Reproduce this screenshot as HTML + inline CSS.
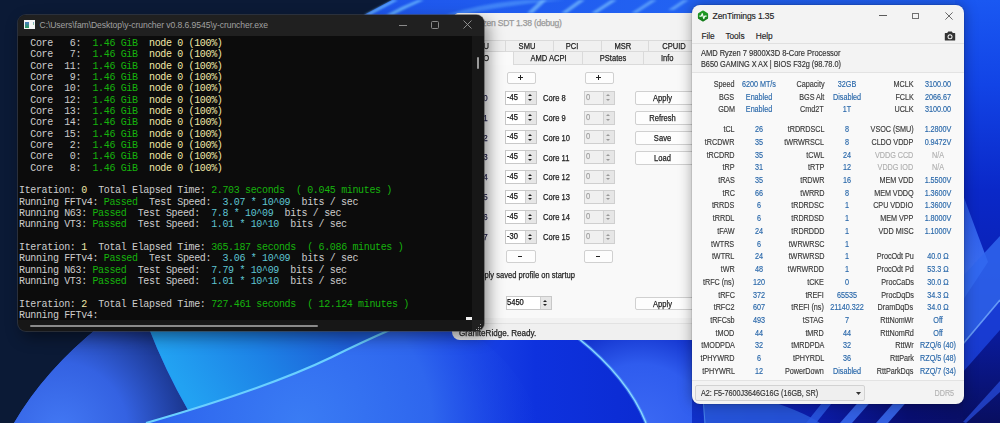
<!DOCTYPE html>
<html><head><meta charset="utf-8"><style>
*{margin:0;padding:0;box-sizing:border-box}
html,body{width:1000px;height:423px;overflow:hidden;background:#0b1a36;font-family:"Liberation Sans",sans-serif}
#bg{position:absolute;left:0;top:0}
.a{position:absolute;white-space:nowrap}
/* terminal */
#term{position:absolute;left:18px;top:15px;width:466px;height:316px;background:#171717;border-radius:8px;overflow:hidden;box-shadow:0 0 0 1px rgba(70,70,70,.55),4px 6px 16px rgba(0,0,0,.45)}
#term .tb{position:absolute;left:0;top:0;width:466px;height:22px;background:#202020}
#term .content{position:absolute;left:0;top:22px;width:454px;height:283.5px;background:#0c0c0c;overflow:hidden}
#term .tl{position:absolute;left:1px;white-space:pre;font-family:"Liberation Mono",monospace;font-size:10px;line-height:12px;color:#cccccc;letter-spacing:-0.35px}
.g{color:#16b30c}.y{color:#f1e9a8}.c{color:#5ec4d2}
/* sdt */
#sdt{position:absolute;left:452px;top:13px;width:300px;height:327px;background:#f0f0f0;border-radius:8px;overflow:hidden;font-size:8px;color:#1e1e1e}
#sdt .t{font-size:8px;letter-spacing:-0.05px}
.btn{position:absolute;background:#fdfdfd;border:1px solid #d0d0d0;border-radius:2px}
.nud{position:absolute;background:#fff;border:1px solid #c8c8c8}
.nud.dis{background:#f0f0f0;border-color:#cfcfcf}
.sp{position:absolute;right:0;top:0;width:11px;height:100%;background:linear-gradient(#e6e6e6 0,#e6e6e6 46%,#c8c8c8 46%,#c8c8c8 54%,#e6e6e6 54%);border-left:1px solid #d0d0d0}
.sp:before{content:"";position:absolute;left:2.5px;top:2.8px;border-left:2.6px solid transparent;border-right:2.6px solid transparent;border-bottom:2.4px solid #222}
.sp:after{content:"";position:absolute;left:2.5px;bottom:2.8px;border-left:2.6px solid transparent;border-right:2.6px solid transparent;border-top:2.4px solid #222}
.dis .sp:before{border-bottom-color:#999}.dis .sp:after{border-top-color:#999}
/* zen */
#zen{position:absolute;left:692px;top:5px;width:272px;height:399px;background:#f3f3f3;border-radius:8px;overflow:hidden;box-shadow:0 0 14px rgba(0,0,0,.35),0 0 0 1px rgba(0,0,0,.08)}
.zt{position:absolute;font-size:8.2px;letter-spacing:-0.05px;transform:scaleX(0.885);color:#3a3a3a;-webkit-text-stroke:0.15px currentColor;white-space:nowrap;line-height:10px}
.zv{color:#2a68aa}
</style></head><body>
<svg id="bg" width="1000" height="423" viewBox="0 0 1000 423">
  <defs>
    <filter id="blur1" x="-20%" y="-50%" width="140%" height="200%"><feGaussianBlur stdDeviation="0.8"/></filter>
    <linearGradient id="topblue" x1="0" y1="0" x2="1" y2="0">
      <stop offset="0" stop-color="#1e56ec"/><stop offset="0.5" stop-color="#2262f2"/><stop offset="1" stop-color="#1f5ef4"/>
    </linearGradient>
    <linearGradient id="rightblue" x1="0" y1="0" x2="0" y2="423" gradientUnits="userSpaceOnUse">
      <stop offset="0" stop-color="#1a58f2"/><stop offset="0.2" stop-color="#1244e6"/><stop offset="0.45" stop-color="#0a28c8"/><stop offset="0.62" stop-color="#0a22b8"/><stop offset="0.8" stop-color="#0a1a98"/><stop offset="1" stop-color="#080e60"/></linearGradient>
    <radialGradient id="petal1" cx="60" cy="430" r="150" gradientUnits="userSpaceOnUse">
      <stop offset="0" stop-color="#4278f4"/><stop offset="0.45" stop-color="#3462e2"/><stop offset="0.8" stop-color="#1e3c9a"/><stop offset="1" stop-color="#132a70"/></radialGradient>
    <linearGradient id="cyanp" x1="190" y1="400" x2="330" y2="310" gradientUnits="userSpaceOnUse">
      <stop offset="0" stop-color="#22a2f2"/><stop offset="0.5" stop-color="#1d82e6"/><stop offset="1" stop-color="#1e5cd6"/></linearGradient>
    <radialGradient id="lowp" cx="300" cy="423" r="240" gradientUnits="userSpaceOnUse">
      <stop offset="0" stop-color="#3a7cf4"/><stop offset="0.55" stop-color="#2e66ee"/><stop offset="1" stop-color="#1238e2" stop-opacity="0"/>
    </radialGradient>
    <linearGradient id="deepb" x1="400" y1="0" x2="700" y2="0" gradientUnits="userSpaceOnUse">
      <stop offset="0" stop-color="#2a5cf0"/><stop offset="0.25" stop-color="#1a44e6"/><stop offset="0.45" stop-color="#0e32de"/><stop offset="1" stop-color="#0a28cc"/></linearGradient>
    <radialGradient id="rp" cx="640" cy="430" r="110" gradientUnits="userSpaceOnUse">
      <stop offset="0" stop-color="#3c6af4"/><stop offset="0.6" stop-color="#2f5cee"/><stop offset="1" stop-color="#0e2cc8"/>
    </radialGradient>
    <linearGradient id="rpet" x1="963" y1="200" x2="985" y2="290" gradientUnits="userSpaceOnUse">
      <stop offset="0" stop-color="#2a58e8"/><stop offset="1" stop-color="#3e72f2"/>
    </linearGradient>
    <linearGradient id="zb" x1="692" y1="0" x2="1000" y2="0" gradientUnits="userSpaceOnUse">
      <stop offset="0" stop-color="#1030c8"/><stop offset="0.4" stop-color="#0c1ca8"/><stop offset="0.7" stop-color="#080e70"/><stop offset="1" stop-color="#0a1060"/>
    </linearGradient>
  </defs>
  <rect width="1000" height="423" fill="#0b1a36"/>
  <!-- top strip -->
  <path d="M392 0 L1000 0 L1000 16 L362 16 Z" fill="url(#topblue)"/>
  <g filter="url(#blur1)">
  <path d="M364 15 L393 0 L398 0 L370 15 Z" fill="#6ab8ff" opacity=".9"/>
  <path d="M386 15 Q402 6 418 0 L424 0 Q408 7 393 15 Z" fill="#6ab8ff" opacity=".85"/>
  <path d="M446 15 Q482 3 525 0 L565 0 Q505 5 462 15 Z" fill="#4a90fa" opacity=".75"/>
  <path d="M527 13 L541 0 L547 0 L533 13 Z" fill="#7ac0ff" opacity=".7"/>
  <path d="M561 13 L579 0 L585 0 L567 13 Z" fill="#7ac0ff" opacity=".7"/>
  <path d="M591 13 L611 0 L617 0 L597 13 Z" fill="#7ac0ff" opacity=".7"/>
  <path d="M631 13 L651 0 L657 0 L637 13 Z" fill="#7ac0ff" opacity=".6"/>
  <path d="M668 10 L683 0 L689 0 L674 10 Z" fill="#7ac0ff" opacity=".6"/>
  </g>
  <!-- right strip -->
  <rect x="955" y="0" width="45" height="423" fill="url(#rightblue)"/>
  <path d="M963 195 Q976 230 988 262 L963 300 Z" fill="url(#rpet)"/>
  <path d="M963 276 L1000 236 L1000 300 L963 344 Z" fill="#3066ee" opacity=".85"/>
  <path d="M963 344 L1000 300 L1000 330 L963 372 Z" fill="#1c44e0" opacity=".8"/>
  <path d="M963 344 L1000 300" stroke="#78b0ff" stroke-width="1.6" opacity=".8"/>
  <path d="M963 422 L1000 381 L1000 392 L966 423 Z" fill="#2a50e0" opacity=".7"/>
  <!-- bottom area -->
  <rect x="0" y="326" width="700" height="97" fill="url(#deepb)"/>
  <path d="M0 326 L100 326 Q45 370 14 423 L0 423 Z" fill="#0b1a36"/>
  <path d="M100 326 L148 326 Q165 370 188 410 L146 423 L14 423 Q45 370 100 326 Z" fill="url(#petal1)"/>
  <path d="M148 326 L400 326 L390 330 Q360 343 332 357 Q268 388 188 410 Q165 370 148 326 Z" fill="url(#cyanp)"/>
  <path d="M146 423 Q268 388 332 357 Q360 343 390 330 L400 326 L460 326 Q520 360 540 423 Z" fill="url(#lowp)"/>
  <path d="M146 423 Q268 388 332 357 Q360 343 392 329 L402 325" stroke="#6ad0ff" stroke-width="2.2" fill="none"/>
  <path d="M578 338 Q628 378 646 423 L700 423 L700 338 Z" fill="url(#rp)"/>
  <path d="M578 338 Q628 378 646 423" stroke="#5ab0ff" stroke-width="3.5" fill="none" opacity=".5"/><path d="M578 338 Q628 378 646 423" stroke="#8ad8ff" stroke-width="1.4" fill="none"/>
  
  <rect x="692" y="398" width="271" height="25" fill="url(#zb)"/>
  <path d="M703 398 L760 398 Q800 410 820 423 L704 423 Z" fill="#2a5cdc" opacity=".8"/>
  <path d="M703 398 L705 423" stroke="#5aa0f0" stroke-width="1" opacity=".6"/>
  <path d="M806 423 L826 398 L836 398 L816 423 Z" fill="#2a58e0" opacity=".85"/>
  <path d="M840 423 L862 398 L874 398 L852 423 Z" fill="#3a6cf0" opacity=".85"/>
  <path d="M876 423 L898 398 L910 398 L888 423 Z" fill="#3a6cf0" opacity=".85"/>
  
</svg>
<div id="sdt"><div class="a" style="left:0;top:0;width:300px;height:26.6px;background:#f3f3f3"></div>
<div class="a" style="top:5.32px;font-size:8.60px;letter-spacing:-0.26px;line-height:10px;-webkit-text-stroke:0.25px currentColor;left:20.5px;transform-origin:0 50%;color:#9a9a9a;">Ryzen SDT 1.38 (debug)</div>
<div class="a" style="left:0.0px;top:26.6px;width:308.0px;height:24.9px;background:#f0f0f0"></div>
<div class="a" style="left:0.0px;top:26.6px;width:308.0px;height:12.9px;border-top:1px solid #dadada;border-bottom:1px solid #dadada"></div>
<div class="a" style="left:5.5px;top:26.6px;width:48.0px;height:12.4px;border-right:1px solid #dadada"></div>
<div class="a" style="top:27.55px;font-size:8.80px;letter-spacing:0.00px;line-height:10px;-webkit-text-stroke:0.25px currentColor;left:5.0px;width:48.0px;text-align:center;transform-origin:50% 50%;transform:scaleX(0.860);">CPU</div>
<div class="a" style="left:53.5px;top:26.6px;width:48.0px;height:12.4px;border-right:1px solid #dadada"></div>
<div class="a" style="top:27.55px;font-size:8.80px;letter-spacing:0.00px;line-height:10px;-webkit-text-stroke:0.25px currentColor;left:50.8px;width:48.0px;text-align:center;transform-origin:50% 50%;transform:scaleX(0.860);">SMU</div>
<div class="a" style="left:101.5px;top:26.6px;width:48.1px;height:12.4px;border-right:1px solid #dadada"></div>
<div class="a" style="top:27.55px;font-size:8.80px;letter-spacing:0.00px;line-height:10px;-webkit-text-stroke:0.25px currentColor;left:96.2px;width:48.1px;text-align:center;transform-origin:50% 50%;transform:scaleX(0.860);">PCI</div>
<div class="a" style="left:149.6px;top:26.6px;width:47.9px;height:12.4px;border-right:1px solid #dadada"></div>
<div class="a" style="top:27.55px;font-size:8.80px;letter-spacing:0.00px;line-height:10px;-webkit-text-stroke:0.25px currentColor;left:147.3px;width:47.9px;text-align:center;transform-origin:50% 50%;transform:scaleX(0.860);">MSR</div>
<div class="a" style="left:197.5px;top:26.6px;width:48.0px;height:12.4px;border-right:1px solid #dadada"></div>
<div class="a" style="top:27.55px;font-size:8.80px;letter-spacing:0.00px;line-height:10px;-webkit-text-stroke:0.25px currentColor;left:197.6px;width:48.0px;text-align:center;transform-origin:50% 50%;transform:scaleX(0.860);">CPUID</div>
<div class="a" style="left:0.0px;top:39.0px;width:308.0px;height:12.5px;border-bottom:1px solid #dadada"></div>
<div class="a" style="left:62.3px;top:39.0px;width:69.2px;height:12.5px;border-right:1px solid #dadada"></div>
<div class="a" style="top:40.25px;font-size:8.80px;letter-spacing:0.00px;line-height:10px;-webkit-text-stroke:0.25px currentColor;left:61.8px;width:69.2px;text-align:center;transform-origin:50% 50%;transform:scaleX(0.860);">AMD ACPI</div>
<div class="a" style="left:131.5px;top:39.0px;width:60.0px;height:12.5px;border-right:1px solid #dadada"></div>
<div class="a" style="top:40.25px;font-size:8.80px;letter-spacing:0.00px;line-height:10px;-webkit-text-stroke:0.25px currentColor;left:131.3px;width:60.0px;text-align:center;transform-origin:50% 50%;transform:scaleX(0.860);">PStates</div>
<div class="a" style="left:191.5px;top:39.0px;width:56.5px;height:12.5px;border-right:1px solid #dadada"></div>
<div class="a" style="top:40.25px;font-size:8.80px;letter-spacing:0.00px;line-height:10px;-webkit-text-stroke:0.25px currentColor;left:186.5px;width:56.5px;text-align:center;transform-origin:50% 50%;transform:scaleX(0.860);">Info</div>
<div class="a" style="left:-12.0px;top:38.0px;width:74.3px;height:15.0px;background:#fafafa;border:1px solid #dadada;border-bottom:none"></div>
<div class="a" style="top:39.95px;font-size:8.80px;letter-spacing:0.00px;line-height:10px;-webkit-text-stroke:0.25px currentColor;right:263.0px;transform-origin:100% 50%;transform:scaleX(0.860);color:#1e1e1e;">CO</div>
<div class="a" style="left:0.0px;top:51.5px;width:308.0px;height:253.8px;background:#f9f9f9"></div>
<div class="a" style="left:0.0px;top:305.3px;width:308.0px;height:6.0px;background:#f2f2f2;border-bottom:1px solid #e2e2e2"></div>
<div class="btn" style="left:54.8px;top:58.6px;width:29.0px;height:12.8px"></div>
<div class="a" style="left:54.8px;top:58.6px;width:29.0px;height:12.8px;"><div class="a" style="left:11.5px;top:5.5px;width:5px;height:1.2px;background:#222"></div><div class="a" style="left:13.4px;top:3.6px;width:1.2px;height:5px;background:#222"></div></div>
<div class="btn" style="left:132.5px;top:58.6px;width:29.0px;height:12.8px"></div>
<div class="a" style="left:132.5px;top:58.6px;width:29.0px;height:12.8px;"><div class="a" style="left:11.5px;top:5.5px;width:5px;height:1.2px;background:#222"></div><div class="a" style="left:13.4px;top:3.6px;width:1.2px;height:5px;background:#222"></div></div>
<div class="btn" style="left:54.2px;top:236.7px;width:29.4px;height:13.8px"></div>
<div class="a" style="left:54.2px;top:236.7px;width:29.4px;height:13.8px;"><div class="a" style="left:12px;top:6px;width:4px;height:1.2px;background:#222"></div></div>
<div class="btn" style="left:132.0px;top:236.7px;width:29.4px;height:13.8px"></div>
<div class="a" style="left:132.0px;top:236.7px;width:29.4px;height:13.8px;"><div class="a" style="left:12px;top:6px;width:4px;height:1.2px;background:#222"></div></div>
<div class="a" style="top:79.81px;font-size:9.20px;letter-spacing:0.00px;line-height:10px;-webkit-text-stroke:0.25px currentColor;right:264.5px;transform-origin:100% 50%;transform:scaleX(0.860);color:#1e1e4a;">Core 0</div>
<div class="nud" style="left:53.4px;top:77.7px;width:31.3px;height:14.0px"><div class="sp"></div></div>
<div class="a" style="top:78.75px;font-size:8.80px;letter-spacing:0.00px;line-height:10px;-webkit-text-stroke:0.25px currentColor;left:54.6px;transform-origin:0 50%;transform:scaleX(0.860);color:#111;">-45</div>
<div class="a" style="top:79.95px;font-size:8.80px;letter-spacing:0.00px;line-height:10px;-webkit-text-stroke:0.25px currentColor;left:90.6px;transform-origin:0 50%;transform:scaleX(0.860);">Core 8</div>
<div class="nud dis" style="left:131.6px;top:77.7px;width:31.1px;height:14.0px"><div class="sp"></div></div>
<div class="a" style="top:78.75px;font-size:8.80px;letter-spacing:0.00px;line-height:10px;-webkit-text-stroke:0.25px currentColor;left:133.5px;transform-origin:0 50%;transform:scaleX(0.860);color:#a0a0a0;">0</div>
<div class="a" style="top:99.68px;font-size:9.20px;letter-spacing:0.00px;line-height:10px;-webkit-text-stroke:0.25px currentColor;right:264.5px;transform-origin:100% 50%;transform:scaleX(0.860);color:#1e1e4a;">Core 1</div>
<div class="nud" style="left:53.4px;top:97.6px;width:31.3px;height:14.0px"><div class="sp"></div></div>
<div class="a" style="top:98.62px;font-size:8.80px;letter-spacing:0.00px;line-height:10px;-webkit-text-stroke:0.25px currentColor;left:54.6px;transform-origin:0 50%;transform:scaleX(0.860);color:#111;">-45</div>
<div class="a" style="top:99.82px;font-size:8.80px;letter-spacing:0.00px;line-height:10px;-webkit-text-stroke:0.25px currentColor;left:90.6px;transform-origin:0 50%;transform:scaleX(0.860);">Core 9</div>
<div class="nud dis" style="left:131.6px;top:97.6px;width:31.1px;height:14.0px"><div class="sp"></div></div>
<div class="a" style="top:98.62px;font-size:8.80px;letter-spacing:0.00px;line-height:10px;-webkit-text-stroke:0.25px currentColor;left:133.5px;transform-origin:0 50%;transform:scaleX(0.860);color:#a0a0a0;">0</div>
<div class="a" style="top:119.55px;font-size:9.20px;letter-spacing:0.00px;line-height:10px;-webkit-text-stroke:0.25px currentColor;right:264.5px;transform-origin:100% 50%;transform:scaleX(0.860);color:#1e1e4a;">Core 2</div>
<div class="nud" style="left:53.4px;top:117.4px;width:31.3px;height:14.0px"><div class="sp"></div></div>
<div class="a" style="top:118.49px;font-size:8.80px;letter-spacing:0.00px;line-height:10px;-webkit-text-stroke:0.25px currentColor;left:54.6px;transform-origin:0 50%;transform:scaleX(0.860);color:#111;">-45</div>
<div class="a" style="top:119.69px;font-size:8.80px;letter-spacing:0.00px;line-height:10px;-webkit-text-stroke:0.25px currentColor;left:90.6px;transform-origin:0 50%;transform:scaleX(0.860);">Core 10</div>
<div class="nud dis" style="left:131.6px;top:117.4px;width:31.1px;height:14.0px"><div class="sp"></div></div>
<div class="a" style="top:118.49px;font-size:8.80px;letter-spacing:0.00px;line-height:10px;-webkit-text-stroke:0.25px currentColor;left:133.5px;transform-origin:0 50%;transform:scaleX(0.860);color:#a0a0a0;">0</div>
<div class="a" style="top:139.42px;font-size:9.20px;letter-spacing:0.00px;line-height:10px;-webkit-text-stroke:0.25px currentColor;right:264.5px;transform-origin:100% 50%;transform:scaleX(0.860);color:#1e1e4a;">Core 3</div>
<div class="nud" style="left:53.4px;top:137.3px;width:31.3px;height:14.0px"><div class="sp"></div></div>
<div class="a" style="top:138.36px;font-size:8.80px;letter-spacing:0.00px;line-height:10px;-webkit-text-stroke:0.25px currentColor;left:54.6px;transform-origin:0 50%;transform:scaleX(0.860);color:#111;">-45</div>
<div class="a" style="top:139.56px;font-size:8.80px;letter-spacing:0.00px;line-height:10px;-webkit-text-stroke:0.25px currentColor;left:90.6px;transform-origin:0 50%;transform:scaleX(0.860);">Core 11</div>
<div class="nud dis" style="left:131.6px;top:137.3px;width:31.1px;height:14.0px"><div class="sp"></div></div>
<div class="a" style="top:138.36px;font-size:8.80px;letter-spacing:0.00px;line-height:10px;-webkit-text-stroke:0.25px currentColor;left:133.5px;transform-origin:0 50%;transform:scaleX(0.860);color:#a0a0a0;">0</div>
<div class="a" style="top:159.29px;font-size:9.20px;letter-spacing:0.00px;line-height:10px;-webkit-text-stroke:0.25px currentColor;right:264.5px;transform-origin:100% 50%;transform:scaleX(0.860);color:#1e1e4a;">Core 4</div>
<div class="nud" style="left:53.4px;top:157.2px;width:31.3px;height:14.0px"><div class="sp"></div></div>
<div class="a" style="top:158.23px;font-size:8.80px;letter-spacing:0.00px;line-height:10px;-webkit-text-stroke:0.25px currentColor;left:54.6px;transform-origin:0 50%;transform:scaleX(0.860);color:#111;">-45</div>
<div class="a" style="top:159.43px;font-size:8.80px;letter-spacing:0.00px;line-height:10px;-webkit-text-stroke:0.25px currentColor;left:90.6px;transform-origin:0 50%;transform:scaleX(0.860);">Core 12</div>
<div class="nud dis" style="left:131.6px;top:157.2px;width:31.1px;height:14.0px"><div class="sp"></div></div>
<div class="a" style="top:158.23px;font-size:8.80px;letter-spacing:0.00px;line-height:10px;-webkit-text-stroke:0.25px currentColor;left:133.5px;transform-origin:0 50%;transform:scaleX(0.860);color:#a0a0a0;">0</div>
<div class="a" style="top:179.16px;font-size:9.20px;letter-spacing:0.00px;line-height:10px;-webkit-text-stroke:0.25px currentColor;right:264.5px;transform-origin:100% 50%;transform:scaleX(0.860);color:#1e1e4a;">Core 5</div>
<div class="nud" style="left:53.4px;top:177.1px;width:31.3px;height:14.0px"><div class="sp"></div></div>
<div class="a" style="top:178.10px;font-size:8.80px;letter-spacing:0.00px;line-height:10px;-webkit-text-stroke:0.25px currentColor;left:54.6px;transform-origin:0 50%;transform:scaleX(0.860);color:#111;">-45</div>
<div class="a" style="top:179.30px;font-size:8.80px;letter-spacing:0.00px;line-height:10px;-webkit-text-stroke:0.25px currentColor;left:90.6px;transform-origin:0 50%;transform:scaleX(0.860);">Core 13</div>
<div class="nud dis" style="left:131.6px;top:177.1px;width:31.1px;height:14.0px"><div class="sp"></div></div>
<div class="a" style="top:178.10px;font-size:8.80px;letter-spacing:0.00px;line-height:10px;-webkit-text-stroke:0.25px currentColor;left:133.5px;transform-origin:0 50%;transform:scaleX(0.860);color:#a0a0a0;">0</div>
<div class="a" style="top:199.03px;font-size:9.20px;letter-spacing:0.00px;line-height:10px;-webkit-text-stroke:0.25px currentColor;right:264.5px;transform-origin:100% 50%;transform:scaleX(0.860);color:#1e1e4a;">Core 6</div>
<div class="nud" style="left:53.4px;top:196.9px;width:31.3px;height:14.0px"><div class="sp"></div></div>
<div class="a" style="top:197.97px;font-size:8.80px;letter-spacing:0.00px;line-height:10px;-webkit-text-stroke:0.25px currentColor;left:54.6px;transform-origin:0 50%;transform:scaleX(0.860);color:#111;">-45</div>
<div class="a" style="top:199.17px;font-size:8.80px;letter-spacing:0.00px;line-height:10px;-webkit-text-stroke:0.25px currentColor;left:90.6px;transform-origin:0 50%;transform:scaleX(0.860);">Core 14</div>
<div class="nud dis" style="left:131.6px;top:196.9px;width:31.1px;height:14.0px"><div class="sp"></div></div>
<div class="a" style="top:197.97px;font-size:8.80px;letter-spacing:0.00px;line-height:10px;-webkit-text-stroke:0.25px currentColor;left:133.5px;transform-origin:0 50%;transform:scaleX(0.860);color:#a0a0a0;">0</div>
<div class="a" style="top:218.90px;font-size:9.20px;letter-spacing:0.00px;line-height:10px;-webkit-text-stroke:0.25px currentColor;right:264.5px;transform-origin:100% 50%;transform:scaleX(0.860);color:#1e1e4a;">Core 7</div>
<div class="nud" style="left:53.4px;top:216.8px;width:31.3px;height:14.0px"><div class="sp"></div></div>
<div class="a" style="top:217.84px;font-size:8.80px;letter-spacing:0.00px;line-height:10px;-webkit-text-stroke:0.25px currentColor;left:54.6px;transform-origin:0 50%;transform:scaleX(0.860);color:#111;">-30</div>
<div class="a" style="top:219.04px;font-size:8.80px;letter-spacing:0.00px;line-height:10px;-webkit-text-stroke:0.25px currentColor;left:90.6px;transform-origin:0 50%;transform:scaleX(0.860);">Core 15</div>
<div class="nud dis" style="left:131.6px;top:216.8px;width:31.1px;height:14.0px"><div class="sp"></div></div>
<div class="a" style="top:217.84px;font-size:8.80px;letter-spacing:0.00px;line-height:10px;-webkit-text-stroke:0.25px currentColor;left:133.5px;transform-origin:0 50%;transform:scaleX(0.860);color:#a0a0a0;">0</div>
<div class="btn" style="left:182.6px;top:77.9px;width:62.4px;height:14.0px"></div>
<div class="a" style="top:79.95px;font-size:8.80px;letter-spacing:0.00px;line-height:10px;-webkit-text-stroke:0.25px currentColor;left:182.2px;width:57.0px;text-align:center;transform-origin:50% 50%;transform:scaleX(0.860);">Apply</div>
<div class="btn" style="left:182.6px;top:97.8px;width:62.4px;height:14.0px"></div>
<div class="a" style="top:99.82px;font-size:8.80px;letter-spacing:0.00px;line-height:10px;-webkit-text-stroke:0.25px currentColor;left:182.2px;width:57.0px;text-align:center;transform-origin:50% 50%;transform:scaleX(0.860);">Refresh</div>
<div class="btn" style="left:182.6px;top:117.6px;width:62.4px;height:14.0px"></div>
<div class="a" style="top:119.69px;font-size:8.80px;letter-spacing:0.00px;line-height:10px;-webkit-text-stroke:0.25px currentColor;left:182.2px;width:57.0px;text-align:center;transform-origin:50% 50%;transform:scaleX(0.860);">Save</div>
<div class="btn" style="left:182.6px;top:137.5px;width:62.4px;height:14.0px"></div>
<div class="a" style="top:139.56px;font-size:8.80px;letter-spacing:0.00px;line-height:10px;-webkit-text-stroke:0.25px currentColor;left:182.2px;width:57.0px;text-align:center;transform-origin:50% 50%;transform:scaleX(0.860);">Load</div>
<div class="a" style="top:256.95px;font-size:8.80px;letter-spacing:0.00px;line-height:10px;-webkit-text-stroke:0.25px currentColor;right:177.5px;transform-origin:100% 50%;transform:scaleX(0.860);">Apply saved profile on startup</div>
<div class="nud" style="left:53.7px;top:283.4px;width:46.3px;height:13.5px"><div class="sp"></div></div>
<div class="a" style="top:284.25px;font-size:8.80px;letter-spacing:0.00px;line-height:10px;-webkit-text-stroke:0.25px currentColor;left:54.8px;transform-origin:0 50%;transform:scaleX(0.860);color:#111;">5450</div>
<div class="btn" style="left:182.5px;top:283.6px;width:62.5px;height:13.7px"></div>
<div class="a" style="top:285.95px;font-size:8.80px;letter-spacing:0.00px;line-height:10px;-webkit-text-stroke:0.25px currentColor;left:182.1px;width:57.0px;text-align:center;transform-origin:50% 50%;transform:scaleX(0.860);">Apply</div>
<div class="a" style="top:314.95px;font-size:8.80px;letter-spacing:0.00px;line-height:10px;-webkit-text-stroke:0.25px currentColor;left:7.0px;transform-origin:0 50%;transform:scaleX(0.920);">GraniteRidge. Ready.</div></div>
<div id="term"><div class="a" style="left:0;top:-1px;width:466px;height:317px">
 <div class="tb">
  <div class="a" style="left:6px;top:6px;width:11px;height:9px;background:#f4f4f4"><div class="a" style="left:1px;top:2px;width:4px;height:5.5px;background:linear-gradient(#4a7ac0,#2a9a5a)"></div><div class="a" style="left:8.5px;top:2px;width:1.5px;height:3px;background:linear-gradient(#7aa0d0,#8ad08a)"></div></div>
  <div class="a" style="left:21.5px;top:5.5px;font-size:8.6px;color:#a0a0a0;letter-spacing:-0.08px">C:\Users\fam\Desktop\y-cruncher v0.8.6.9545\y-cruncher.exe</div>
  <div class="a" style="left:381px;top:10.5px;width:8px;height:1px;background:#8a8a8a"></div>
  <div class="a" style="left:413px;top:6.5px;width:8px;height:8px;border:1px solid #8a8a8a;border-radius:1.5px"></div>
  <svg class="a" style="left:445px;top:6px" width="9" height="9" viewBox="0 0 9 9"><path d="M0.5 0.5L8.5 8.5M8.5 0.5L0.5 8.5" stroke="#9a9a9a" stroke-width="0.9"/></svg>
 </div>
 <div class="content"><div class="tl" style="top:2.00px">  Core   6:  <span class="g">1.46 GiB</span>  <span class="y">node 0 (100%)</span></div><div class="tl" style="top:13.33px">  Core   7:  <span class="g">1.46 GiB</span>  <span class="y">node 0 (100%)</span></div><div class="tl" style="top:24.66px">  Core  11:  <span class="g">1.46 GiB</span>  <span class="y">node 0 (100%)</span></div><div class="tl" style="top:35.99px">  Core   9:  <span class="g">1.46 GiB</span>  <span class="y">node 0 (100%)</span></div><div class="tl" style="top:47.32px">  Core  10:  <span class="g">1.46 GiB</span>  <span class="y">node 0 (100%)</span></div><div class="tl" style="top:58.65px">  Core  12:  <span class="g">1.46 GiB</span>  <span class="y">node 0 (100%)</span></div><div class="tl" style="top:69.98px">  Core  13:  <span class="g">1.46 GiB</span>  <span class="y">node 0 (100%)</span></div><div class="tl" style="top:81.31px">  Core  14:  <span class="g">1.46 GiB</span>  <span class="y">node 0 (100%)</span></div><div class="tl" style="top:92.64px">  Core  15:  <span class="g">1.46 GiB</span>  <span class="y">node 0 (100%)</span></div><div class="tl" style="top:103.97px">  Core   2:  <span class="g">1.46 GiB</span>  <span class="y">node 0 (100%)</span></div><div class="tl" style="top:115.30px">  Core   0:  <span class="g">1.46 GiB</span>  <span class="y">node 0 (100%)</span></div><div class="tl" style="top:126.63px">  Core   8:  <span class="g">1.46 GiB</span>  <span class="y">node 0 (100%)</span></div><div class="tl" style="top:137.96px"></div><div class="tl" style="top:149.29px">Iteration: <span class="y">0</span>  Total Elapsed Time: <span class="g">2.703 seconds  ( 0.045 minutes )</span></div><div class="tl" style="top:160.62px">Running FFTv4: <span class="g">Passed</span>  Test Speed:  <span class="c">3.07 * 10^09</span>  bits / sec</div><div class="tl" style="top:171.95px">Running N63: <span class="g">Passed</span>  Test Speed:  <span class="c">7.8 * 10^09</span>  bits / sec</div><div class="tl" style="top:183.28px">Running VT3: <span class="g">Passed</span>  Test Speed:  <span class="c">1.01 * 10^10</span>  bits / sec</div><div class="tl" style="top:194.61px"></div><div class="tl" style="top:205.94px">Iteration: <span class="y">1</span>  Total Elapsed Time: <span class="g">365.187 seconds  ( 6.086 minutes )</span></div><div class="tl" style="top:217.27px">Running FFTv4: <span class="g">Passed</span>  Test Speed:  <span class="c">3.06 * 10^09</span>  bits / sec</div><div class="tl" style="top:228.60px">Running N63: <span class="g">Passed</span>  Test Speed:  <span class="c">7.79 * 10^09</span>  bits / sec</div><div class="tl" style="top:239.93px">Running VT3: <span class="g">Passed</span>  Test Speed:  <span class="c">1.01 * 10^10</span>  bits / sec</div><div class="tl" style="top:251.26px"></div><div class="tl" style="top:262.59px">Iteration: <span class="y">2</span>  Total Elapsed Time: <span class="g">727.461 seconds  ( 12.124 minutes )</span></div><div class="tl" style="top:273.92px">Running FFTv4:</div></div>
 <div class="a" style="left:459px;top:43px;width:2px;height:12px;background:#9a9a9a;border-radius:1px"></div>
 <div class="a" style="left:12px;top:311px;width:288px;height:2px;background:#8a8a8a;border-radius:1px"></div>
 <div class="a" style="left:454px;top:305.5px;width:11.5px;height:11.5px;background:#202020"></div>
 <div class="a" style="left:448.2px;top:302.6px;width:5.8px;height:3.2px;background:#f0f0f0"></div>
 <div class="a" style="left:462px;top:310px;width:1.2px;height:1.2px;background:#9a9a9a"></div>
 <div class="a" style="left:460px;top:312.5px;width:1.2px;height:1.2px;background:#9a9a9a"></div><div class="a" style="left:462px;top:312.5px;width:1.2px;height:1.2px;background:#9a9a9a"></div>
 <div class="a" style="left:457.5px;top:315px;width:1.2px;height:1.2px;background:#9a9a9a"></div><div class="a" style="left:460px;top:315px;width:1.2px;height:1.2px;background:#9a9a9a"></div><div class="a" style="left:462px;top:315px;width:1.2px;height:1.2px;background:#9a9a9a"></div>
</div></div>
<div id="zen"><svg class="a" style="left:5px;top:4.5px" width="12" height="12" viewBox="0 0 12 12"><defs><linearGradient id="zg" x1="0" y1="0" x2="0" y2="1"><stop offset="0" stop-color="#22a026"/><stop offset="1" stop-color="#137a1a"/></linearGradient></defs><path d="M6 0.6Q6.4 0.6 6.8 0.8L10.4 2.9Q11.1 3.3 11.1 4.1V7.9Q11.1 8.7 10.4 9.1L6.8 11.2Q6 11.6 5.2 11.2L1.6 9.1Q0.9 8.7 0.9 7.9V4.1Q0.9 3.3 1.6 2.9L5.2 0.8Q5.6 0.6 6 0.6Z" fill="url(#zg)"/><path d="M2.4 6.1H4.3L5.2 3.6L6.8 8.6L7.7 6.1H9.6" stroke="#f4fff4" stroke-width="1.2" fill="none" stroke-linejoin="round"/></svg>
<div class="zt" style="left:20.6px;top:6px;font-size:8.6px;letter-spacing:-0.15px;color:#1e1e1e;transform:none">ZenTimings 1.35</div>
<div class="a" style="left:187.4px;top:10px;width:7.4px;height:1px;background:#5a5a5a"></div>
<div class="a" style="left:220px;top:7.5px;width:7px;height:6.5px;border:0.8px solid #707070"></div>
<svg class="a" style="left:252.5px;top:7px" width="8" height="8" viewBox="0 0 8 8"><path d="M0.4 0.4L7.6 7.6M7.6 0.4L0.4 7.6" stroke="#505050" stroke-width="0.85"/></svg>
<div class="zt " style="top:25.9px;left:9.5px;transform-origin:0 50%;color:#1e1e1e;transform:none;font-size:8.3px;">File</div>
<div class="zt " style="top:25.9px;left:33.4px;transform-origin:0 50%;color:#1e1e1e;transform:none;font-size:8.3px;">Tools</div>
<div class="zt " style="top:25.9px;left:63.8px;transform-origin:0 50%;color:#1e1e1e;transform:none;font-size:8.3px;">Help</div>
<svg class="a" style="left:252px;top:25.5px" width="12" height="10" viewBox="0 0 12 10"><path d="M0.8 2.6Q0.8 2 1.4 2H3.2L4.2 0.6H7.8L8.8 2H10.6Q11.2 2 11.2 2.6V9Q11.2 9.5 10.6 9.5H1.4Q0.8 9.5 0.8 9Z" fill="#333"/><circle cx="6" cy="5.7" r="2.5" fill="#f3f3f3"/><circle cx="6" cy="5.7" r="1.5" fill="#333"/></svg>
<div class="a" style="left:0;top:38.3px;width:272px;height:1px;background:#e0e0e0"></div>
<div class="zt " style="top:44.1px;left:8.5px;transform-origin:0 50%;color:#333;transform:scaleX(0.92);">AMD Ryzen 7 9800X3D 8-Core Processor</div>
<div class="zt " style="top:54.6px;left:8.5px;transform-origin:0 50%;color:#333;transform:scaleX(0.9);">B650 GAMING X AX | BIOS F32g (98.78.0)</div>
<div class="a" style="left:0;top:67.2px;width:272px;height:308px;background:#f9f9f9;border-top:1px solid #e3e3e3"></div>
<div class="zt " style="top:75.1px;right:229.5px;transform-origin:100% 50%;">Speed</div>
<div class="zt zv" style="top:75.1px;left:26.5px;width:80px;text-align:center;transform-origin:50% 50%;">6200 MT/s</div>
<div class="zt " style="top:75.1px;right:140.0px;transform-origin:100% 50%;">Capacity</div>
<div class="zt zv" style="top:75.1px;left:114.7px;width:80px;text-align:center;transform-origin:50% 50%;">32GB</div>
<div class="zt " style="top:75.1px;right:50.5px;transform-origin:100% 50%;">MCLK</div>
<div class="zt zv" style="top:75.1px;left:206.0px;width:80px;text-align:center;transform-origin:50% 50%;">3100.00</div>
<div class="zt " style="top:87.6px;right:229.5px;transform-origin:100% 50%;">BGS</div>
<div class="zt zv" style="top:87.6px;left:26.5px;width:80px;text-align:center;transform-origin:50% 50%;">Enabled</div>
<div class="zt " style="top:87.6px;right:140.0px;transform-origin:100% 50%;">BGS Alt</div>
<div class="zt zv" style="top:87.6px;left:114.7px;width:80px;text-align:center;transform-origin:50% 50%;">Disabled</div>
<div class="zt " style="top:87.6px;right:50.5px;transform-origin:100% 50%;">FCLK</div>
<div class="zt zv" style="top:87.6px;left:206.0px;width:80px;text-align:center;transform-origin:50% 50%;">2066.67</div>
<div class="zt " style="top:100.1px;right:229.5px;transform-origin:100% 50%;">GDM</div>
<div class="zt zv" style="top:100.1px;left:26.5px;width:80px;text-align:center;transform-origin:50% 50%;">Enabled</div>
<div class="zt " style="top:100.1px;right:140.0px;transform-origin:100% 50%;">Cmd2T</div>
<div class="zt zv" style="top:100.1px;left:114.7px;width:80px;text-align:center;transform-origin:50% 50%;">1T</div>
<div class="zt " style="top:100.1px;right:50.5px;transform-origin:100% 50%;">UCLK</div>
<div class="zt zv" style="top:100.1px;left:206.0px;width:80px;text-align:center;transform-origin:50% 50%;">3100.00</div>
<div class="zt " style="top:120.1px;right:229.5px;transform-origin:100% 50%;">tCL</div>
<div class="zt zv" style="top:120.1px;left:26.5px;width:80px;text-align:center;transform-origin:50% 50%;">26</div>
<div class="zt " style="top:120.1px;right:140.0px;transform-origin:100% 50%;">tRDRDSCL</div>
<div class="zt zv" style="top:120.1px;left:114.7px;width:80px;text-align:center;transform-origin:50% 50%;">8</div>
<div class="zt " style="top:120.1px;right:50.5px;transform-origin:100% 50%;">VSOC (SMU)</div>
<div class="zt zv" style="top:120.1px;left:206.0px;width:80px;text-align:center;transform-origin:50% 50%;">1.2800V</div>
<div class="zt " style="top:132.8px;right:229.5px;transform-origin:100% 50%;">tRCDWR</div>
<div class="zt zv" style="top:132.8px;left:26.5px;width:80px;text-align:center;transform-origin:50% 50%;">35</div>
<div class="zt " style="top:132.8px;right:140.0px;transform-origin:100% 50%;">tWRWRSCL</div>
<div class="zt zv" style="top:132.8px;left:114.7px;width:80px;text-align:center;transform-origin:50% 50%;">8</div>
<div class="zt " style="top:132.8px;right:50.5px;transform-origin:100% 50%;">CLDO VDDP</div>
<div class="zt zv" style="top:132.8px;left:206.0px;width:80px;text-align:center;transform-origin:50% 50%;">0.9472V</div>
<div class="zt " style="top:145.5px;right:229.5px;transform-origin:100% 50%;">tRCDRD</div>
<div class="zt zv" style="top:145.5px;left:26.5px;width:80px;text-align:center;transform-origin:50% 50%;">35</div>
<div class="zt " style="top:145.5px;right:140.0px;transform-origin:100% 50%;">tCWL</div>
<div class="zt zv" style="top:145.5px;left:114.7px;width:80px;text-align:center;transform-origin:50% 50%;">24</div>
<div class="zt " style="top:145.5px;right:50.5px;transform-origin:100% 50%;color:#b0b0b0;">VDDG CCD</div>
<div class="zt zv" style="top:145.5px;left:206.0px;width:80px;text-align:center;transform-origin:50% 50%;color:#b0b0b0;">N/A</div>
<div class="zt " style="top:158.3px;right:229.5px;transform-origin:100% 50%;">tRP</div>
<div class="zt zv" style="top:158.3px;left:26.5px;width:80px;text-align:center;transform-origin:50% 50%;">31</div>
<div class="zt " style="top:158.3px;right:140.0px;transform-origin:100% 50%;">tRTP</div>
<div class="zt zv" style="top:158.3px;left:114.7px;width:80px;text-align:center;transform-origin:50% 50%;">12</div>
<div class="zt " style="top:158.3px;right:50.5px;transform-origin:100% 50%;color:#b0b0b0;">VDDG IOD</div>
<div class="zt zv" style="top:158.3px;left:206.0px;width:80px;text-align:center;transform-origin:50% 50%;color:#b0b0b0;">N/A</div>
<div class="zt " style="top:171.0px;right:229.5px;transform-origin:100% 50%;">tRAS</div>
<div class="zt zv" style="top:171.0px;left:26.5px;width:80px;text-align:center;transform-origin:50% 50%;">35</div>
<div class="zt " style="top:171.0px;right:140.0px;transform-origin:100% 50%;">tRDWR</div>
<div class="zt zv" style="top:171.0px;left:114.7px;width:80px;text-align:center;transform-origin:50% 50%;">16</div>
<div class="zt " style="top:171.0px;right:50.5px;transform-origin:100% 50%;">MEM VDD</div>
<div class="zt zv" style="top:171.0px;left:206.0px;width:80px;text-align:center;transform-origin:50% 50%;">1.5500V</div>
<div class="zt " style="top:183.7px;right:229.5px;transform-origin:100% 50%;">tRC</div>
<div class="zt zv" style="top:183.7px;left:26.5px;width:80px;text-align:center;transform-origin:50% 50%;">66</div>
<div class="zt " style="top:183.7px;right:140.0px;transform-origin:100% 50%;">tWRRD</div>
<div class="zt zv" style="top:183.7px;left:114.7px;width:80px;text-align:center;transform-origin:50% 50%;">8</div>
<div class="zt " style="top:183.7px;right:50.5px;transform-origin:100% 50%;">MEM VDDQ</div>
<div class="zt zv" style="top:183.7px;left:206.0px;width:80px;text-align:center;transform-origin:50% 50%;">1.3600V</div>
<div class="zt " style="top:196.4px;right:229.5px;transform-origin:100% 50%;">tRRDS</div>
<div class="zt zv" style="top:196.4px;left:26.5px;width:80px;text-align:center;transform-origin:50% 50%;">6</div>
<div class="zt " style="top:196.4px;right:140.0px;transform-origin:100% 50%;">tRDRDSC</div>
<div class="zt zv" style="top:196.4px;left:114.7px;width:80px;text-align:center;transform-origin:50% 50%;">1</div>
<div class="zt " style="top:196.4px;right:50.5px;transform-origin:100% 50%;">CPU VDDIO</div>
<div class="zt zv" style="top:196.4px;left:206.0px;width:80px;text-align:center;transform-origin:50% 50%;">1.3600V</div>
<div class="zt " style="top:209.1px;right:229.5px;transform-origin:100% 50%;">tRRDL</div>
<div class="zt zv" style="top:209.1px;left:26.5px;width:80px;text-align:center;transform-origin:50% 50%;">6</div>
<div class="zt " style="top:209.1px;right:140.0px;transform-origin:100% 50%;">tRDRDSD</div>
<div class="zt zv" style="top:209.1px;left:114.7px;width:80px;text-align:center;transform-origin:50% 50%;">1</div>
<div class="zt " style="top:209.1px;right:50.5px;transform-origin:100% 50%;">MEM VPP</div>
<div class="zt zv" style="top:209.1px;left:206.0px;width:80px;text-align:center;transform-origin:50% 50%;">1.8000V</div>
<div class="zt " style="top:221.9px;right:229.5px;transform-origin:100% 50%;">tFAW</div>
<div class="zt zv" style="top:221.9px;left:26.5px;width:80px;text-align:center;transform-origin:50% 50%;">24</div>
<div class="zt " style="top:221.9px;right:140.0px;transform-origin:100% 50%;">tRDRDDD</div>
<div class="zt zv" style="top:221.9px;left:114.7px;width:80px;text-align:center;transform-origin:50% 50%;">1</div>
<div class="zt " style="top:221.9px;right:50.5px;transform-origin:100% 50%;">VDD MISC</div>
<div class="zt zv" style="top:221.9px;left:206.0px;width:80px;text-align:center;transform-origin:50% 50%;">1.1000V</div>
<div class="zt " style="top:234.6px;right:229.5px;transform-origin:100% 50%;">tWTRS</div>
<div class="zt zv" style="top:234.6px;left:26.5px;width:80px;text-align:center;transform-origin:50% 50%;">6</div>
<div class="zt " style="top:234.6px;right:140.0px;transform-origin:100% 50%;">tWRWRSC</div>
<div class="zt zv" style="top:234.6px;left:114.7px;width:80px;text-align:center;transform-origin:50% 50%;">1</div>
<div class="zt " style="top:247.3px;right:229.5px;transform-origin:100% 50%;">tWTRL</div>
<div class="zt zv" style="top:247.3px;left:26.5px;width:80px;text-align:center;transform-origin:50% 50%;">24</div>
<div class="zt " style="top:247.3px;right:140.0px;transform-origin:100% 50%;">tWRWRSD</div>
<div class="zt zv" style="top:247.3px;left:114.7px;width:80px;text-align:center;transform-origin:50% 50%;">1</div>
<div class="zt " style="top:247.3px;right:50.5px;transform-origin:100% 50%;">ProcOdt Pu</div>
<div class="zt zv" style="top:247.3px;left:206.0px;width:80px;text-align:center;transform-origin:50% 50%;">40.0 Ω</div>
<div class="zt " style="top:260.0px;right:229.5px;transform-origin:100% 50%;">tWR</div>
<div class="zt zv" style="top:260.0px;left:26.5px;width:80px;text-align:center;transform-origin:50% 50%;">48</div>
<div class="zt " style="top:260.0px;right:140.0px;transform-origin:100% 50%;">tWRWRDD</div>
<div class="zt zv" style="top:260.0px;left:114.7px;width:80px;text-align:center;transform-origin:50% 50%;">1</div>
<div class="zt " style="top:260.0px;right:50.5px;transform-origin:100% 50%;">ProcOdt Pd</div>
<div class="zt zv" style="top:260.0px;left:206.0px;width:80px;text-align:center;transform-origin:50% 50%;">53.3 Ω</div>
<div class="zt " style="top:272.7px;right:229.5px;transform-origin:100% 50%;">tRFC (ns)</div>
<div class="zt zv" style="top:272.7px;left:26.5px;width:80px;text-align:center;transform-origin:50% 50%;">120</div>
<div class="zt " style="top:272.7px;right:140.0px;transform-origin:100% 50%;">tCKE</div>
<div class="zt zv" style="top:272.7px;left:114.7px;width:80px;text-align:center;transform-origin:50% 50%;">0</div>
<div class="zt " style="top:272.7px;right:50.5px;transform-origin:100% 50%;">ProcCaDs</div>
<div class="zt zv" style="top:272.7px;left:206.0px;width:80px;text-align:center;transform-origin:50% 50%;">30.0 Ω</div>
<div class="zt " style="top:285.5px;right:229.5px;transform-origin:100% 50%;">tRFC</div>
<div class="zt zv" style="top:285.5px;left:26.5px;width:80px;text-align:center;transform-origin:50% 50%;">372</div>
<div class="zt " style="top:285.5px;right:140.0px;transform-origin:100% 50%;">tREFI</div>
<div class="zt zv" style="top:285.5px;left:114.7px;width:80px;text-align:center;transform-origin:50% 50%;">65535</div>
<div class="zt " style="top:285.5px;right:50.5px;transform-origin:100% 50%;">ProcDqDs</div>
<div class="zt zv" style="top:285.5px;left:206.0px;width:80px;text-align:center;transform-origin:50% 50%;">34.3 Ω</div>
<div class="zt " style="top:298.2px;right:229.5px;transform-origin:100% 50%;">tRFC2</div>
<div class="zt zv" style="top:298.2px;left:26.5px;width:80px;text-align:center;transform-origin:50% 50%;">607</div>
<div class="zt " style="top:298.2px;right:140.0px;transform-origin:100% 50%;">tREFI (ns)</div>
<div class="zt zv" style="top:298.2px;left:114.7px;width:80px;text-align:center;transform-origin:50% 50%;">21140.322</div>
<div class="zt " style="top:298.2px;right:50.5px;transform-origin:100% 50%;">DramDqDs</div>
<div class="zt zv" style="top:298.2px;left:206.0px;width:80px;text-align:center;transform-origin:50% 50%;">34.0 Ω</div>
<div class="zt " style="top:310.9px;right:229.5px;transform-origin:100% 50%;">tRFCsb</div>
<div class="zt zv" style="top:310.9px;left:26.5px;width:80px;text-align:center;transform-origin:50% 50%;">493</div>
<div class="zt " style="top:310.9px;right:140.0px;transform-origin:100% 50%;">tSTAG</div>
<div class="zt zv" style="top:310.9px;left:114.7px;width:80px;text-align:center;transform-origin:50% 50%;">7</div>
<div class="zt " style="top:310.9px;right:50.5px;transform-origin:100% 50%;">RttNomWr</div>
<div class="zt zv" style="top:310.9px;left:206.0px;width:80px;text-align:center;transform-origin:50% 50%;">Off</div>
<div class="zt " style="top:323.6px;right:229.5px;transform-origin:100% 50%;">tMOD</div>
<div class="zt zv" style="top:323.6px;left:26.5px;width:80px;text-align:center;transform-origin:50% 50%;">44</div>
<div class="zt " style="top:323.6px;right:140.0px;transform-origin:100% 50%;">tMRD</div>
<div class="zt zv" style="top:323.6px;left:114.7px;width:80px;text-align:center;transform-origin:50% 50%;">44</div>
<div class="zt " style="top:323.6px;right:50.5px;transform-origin:100% 50%;">RttNomRd</div>
<div class="zt zv" style="top:323.6px;left:206.0px;width:80px;text-align:center;transform-origin:50% 50%;">Off</div>
<div class="zt " style="top:336.3px;right:229.5px;transform-origin:100% 50%;">tMODPDA</div>
<div class="zt zv" style="top:336.3px;left:26.5px;width:80px;text-align:center;transform-origin:50% 50%;">32</div>
<div class="zt " style="top:336.3px;right:140.0px;transform-origin:100% 50%;">tMRDPDA</div>
<div class="zt zv" style="top:336.3px;left:114.7px;width:80px;text-align:center;transform-origin:50% 50%;">32</div>
<div class="zt " style="top:336.3px;right:50.5px;transform-origin:100% 50%;">RttWr</div>
<div class="zt zv" style="top:336.3px;left:206.0px;width:80px;text-align:center;transform-origin:50% 50%;">RZQ/6 (40)</div>
<div class="zt " style="top:349.1px;right:229.5px;transform-origin:100% 50%;">tPHYWRD</div>
<div class="zt zv" style="top:349.1px;left:26.5px;width:80px;text-align:center;transform-origin:50% 50%;">6</div>
<div class="zt " style="top:349.1px;right:140.0px;transform-origin:100% 50%;">tPHYRDL</div>
<div class="zt zv" style="top:349.1px;left:114.7px;width:80px;text-align:center;transform-origin:50% 50%;">36</div>
<div class="zt " style="top:349.1px;right:50.5px;transform-origin:100% 50%;">RttPark</div>
<div class="zt zv" style="top:349.1px;left:206.0px;width:80px;text-align:center;transform-origin:50% 50%;">RZQ/5 (48)</div>
<div class="zt " style="top:361.8px;right:229.5px;transform-origin:100% 50%;">tPHYWRL</div>
<div class="zt zv" style="top:361.8px;left:26.5px;width:80px;text-align:center;transform-origin:50% 50%;">12</div>
<div class="zt " style="top:361.8px;right:140.0px;transform-origin:100% 50%;">PowerDown</div>
<div class="zt zv" style="top:361.8px;left:114.7px;width:80px;text-align:center;transform-origin:50% 50%;">Disabled</div>
<div class="zt " style="top:361.8px;right:50.5px;transform-origin:100% 50%;">RttParkDqs</div>
<div class="zt zv" style="top:361.8px;left:206.0px;width:80px;text-align:center;transform-origin:50% 50%;">RZQ/7 (34)</div>
<div class="a" style="left:0;top:375.3px;width:272px;height:1px;background:#e3e3e3"></div>
<div class="a" style="left:3.3px;top:380.2px;width:170px;height:15.8px;background:#efefef;border:1px solid #d2d2d2;border-radius:2px"></div>
<div class="zt " style="top:384.1px;left:9.0px;transform-origin:0 50%;color:#333;">A2: F5-7600J3646G16G (16GB, SR)</div>
<svg class="a" style="left:163.5px;top:386.5px" width="5" height="3" viewBox="0 0 5 3"><path d="M0 0H5L2.5 3Z" fill="#333"/></svg>
<div class="zt " style="top:384.1px;right:10.0px;transform-origin:100% 50%;color:#b4b4b4;">DDR5</div></div>
</body></html>
